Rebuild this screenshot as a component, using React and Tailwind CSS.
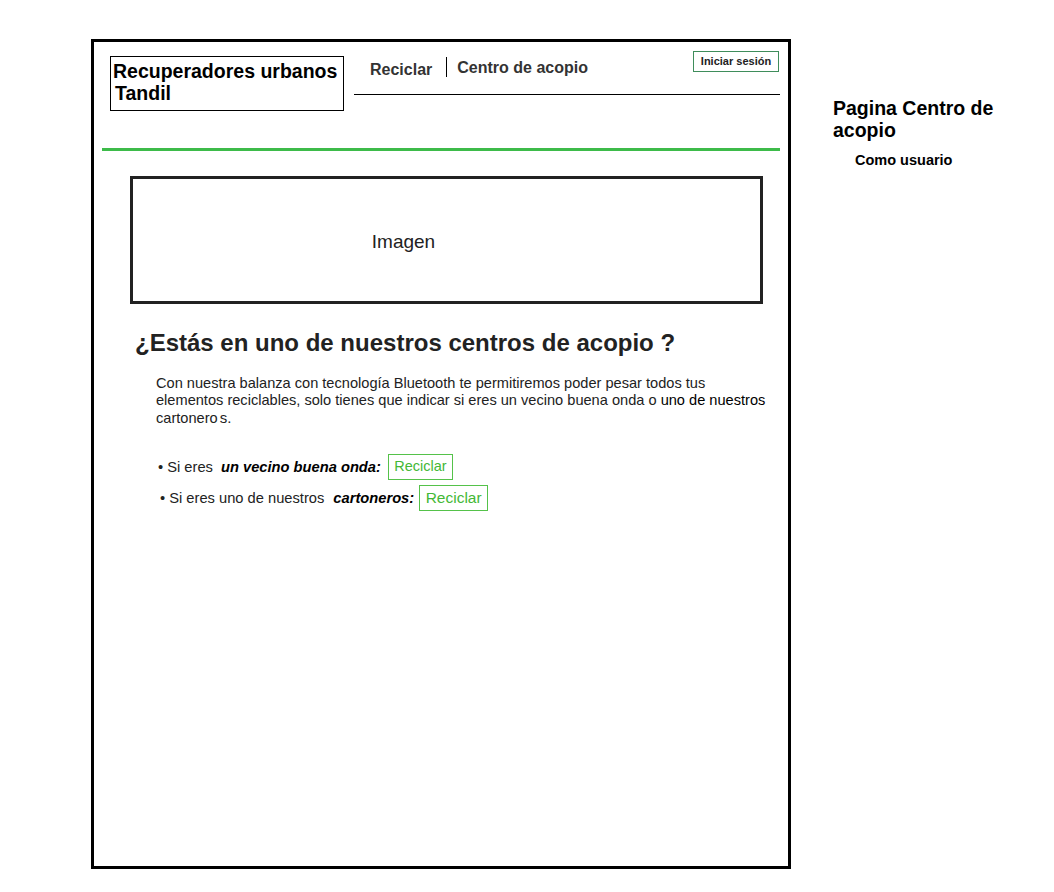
export default function App() {
  return (
    <div className="flex items-start bg-white min-h-[892px] font-['Liberation_Sans',Arial,sans-serif]">
      {/* Wireframe page */}
      <div className="ml-[91px] mt-[39px] w-[700px] h-[830px] border-[3px] border-black flex flex-col">
        {/* Header */}
        <div className="flex items-start pl-[16px] pr-[8px] pt-[9px]">
          <div className="mt-[5px] w-[234px] h-[55px] border border-black px-[2px] pt-[3px] text-[19.5px] leading-[22px] font-bold text-black">
            Recuperadores urbanos
            <br />
            <span className="ml-[2px]">Tandil</span>
          </div>
          <div className="ml-[10px] flex-1 h-[44px] border-b border-black flex items-start">
            <span className="ml-[16px] mt-[7px] text-[16px] font-bold text-[#333]">Reciclar</span>
            <span className="ml-[14px] mt-[6px] w-px h-[20px] bg-black"></span>
            <span className="ml-[10px] mt-[5px] text-[16px] font-bold text-[#333]">Centro de acopio</span>
            <div className="flex-1"></div>
            <button className="mr-[1px] w-[86px] h-[21px] border border-[#3f8d5b] text-[11px] font-bold text-[#222] leading-none">
              Iniciar sesión
            </button>
          </div>
        </div>

        {/* Green divider */}
        <div className="mx-[8px] mt-[37px] h-[3px] bg-[#3dbb4a]"></div>

        {/* Image placeholder */}
        <div className="ml-[36px] mt-[25px] w-[633px] h-[128px] border-[3px] border-[#222] flex items-center justify-center">
          <span className="ml-[-86px] mt-[5px] text-[19px] text-[#222]">Imagen</span>
        </div>

        {/* Content */}
        <h1 className="ml-[41px] mt-[25px] text-[24px] leading-[28px] font-bold text-[#222]">
          ¿Estás en uno de nuestros centros de acopio ?
        </h1>

        <p className="ml-[62px] mt-[18px] text-[14.6px] leading-[17px] text-[#222] whitespace-nowrap">
          Con nuestra balanza con tecnología Bluetooth te permitiremos poder pesar todos tus
          <br />
          elementos reciclables, solo tienes que indicar si eres un vecino buena onda o{' '}
          <span className="text-black">uno de nuestros</span>
          <br />
          cartonero<span className="ml-[2px] text-[15px]">s.</span>
        </p>

        <div className="ml-[64px] mt-[27px] flex flex-col gap-[5px] text-[14.7px] text-[#222]">
          <div className="flex items-center">
            <span>• Si eres</span>
            <span className="ml-[8px] font-bold italic text-black">un vecino buena onda:</span>
            <button className="ml-[7px] w-[65px] h-[26px] border border-[#55c24a] text-[14.5px] text-[#44b836]">
              Reciclar
            </button>
          </div>
          <div className="flex items-center ml-[2px]">
            <span>• Si eres uno de nuestros</span>
            <span className="ml-[9px] font-bold italic text-black">cartoneros:</span>
            <button className="ml-[5px] w-[69px] h-[26px] border border-[#55c24a] text-[15.5px] text-[#44b836]">
              Reciclar
            </button>
          </div>
        </div>
      </div>

      {/* Side notes */}
      <div className="ml-[42px] mt-[97px] w-[190px]">
        <div className="text-[19.5px] leading-[22px] font-bold text-black">Pagina Centro de acopio</div>
        <div className="ml-[22px] mt-[9px] text-[14.5px] font-bold text-black">Como usuario</div>
      </div>
    </div>
  )
}
